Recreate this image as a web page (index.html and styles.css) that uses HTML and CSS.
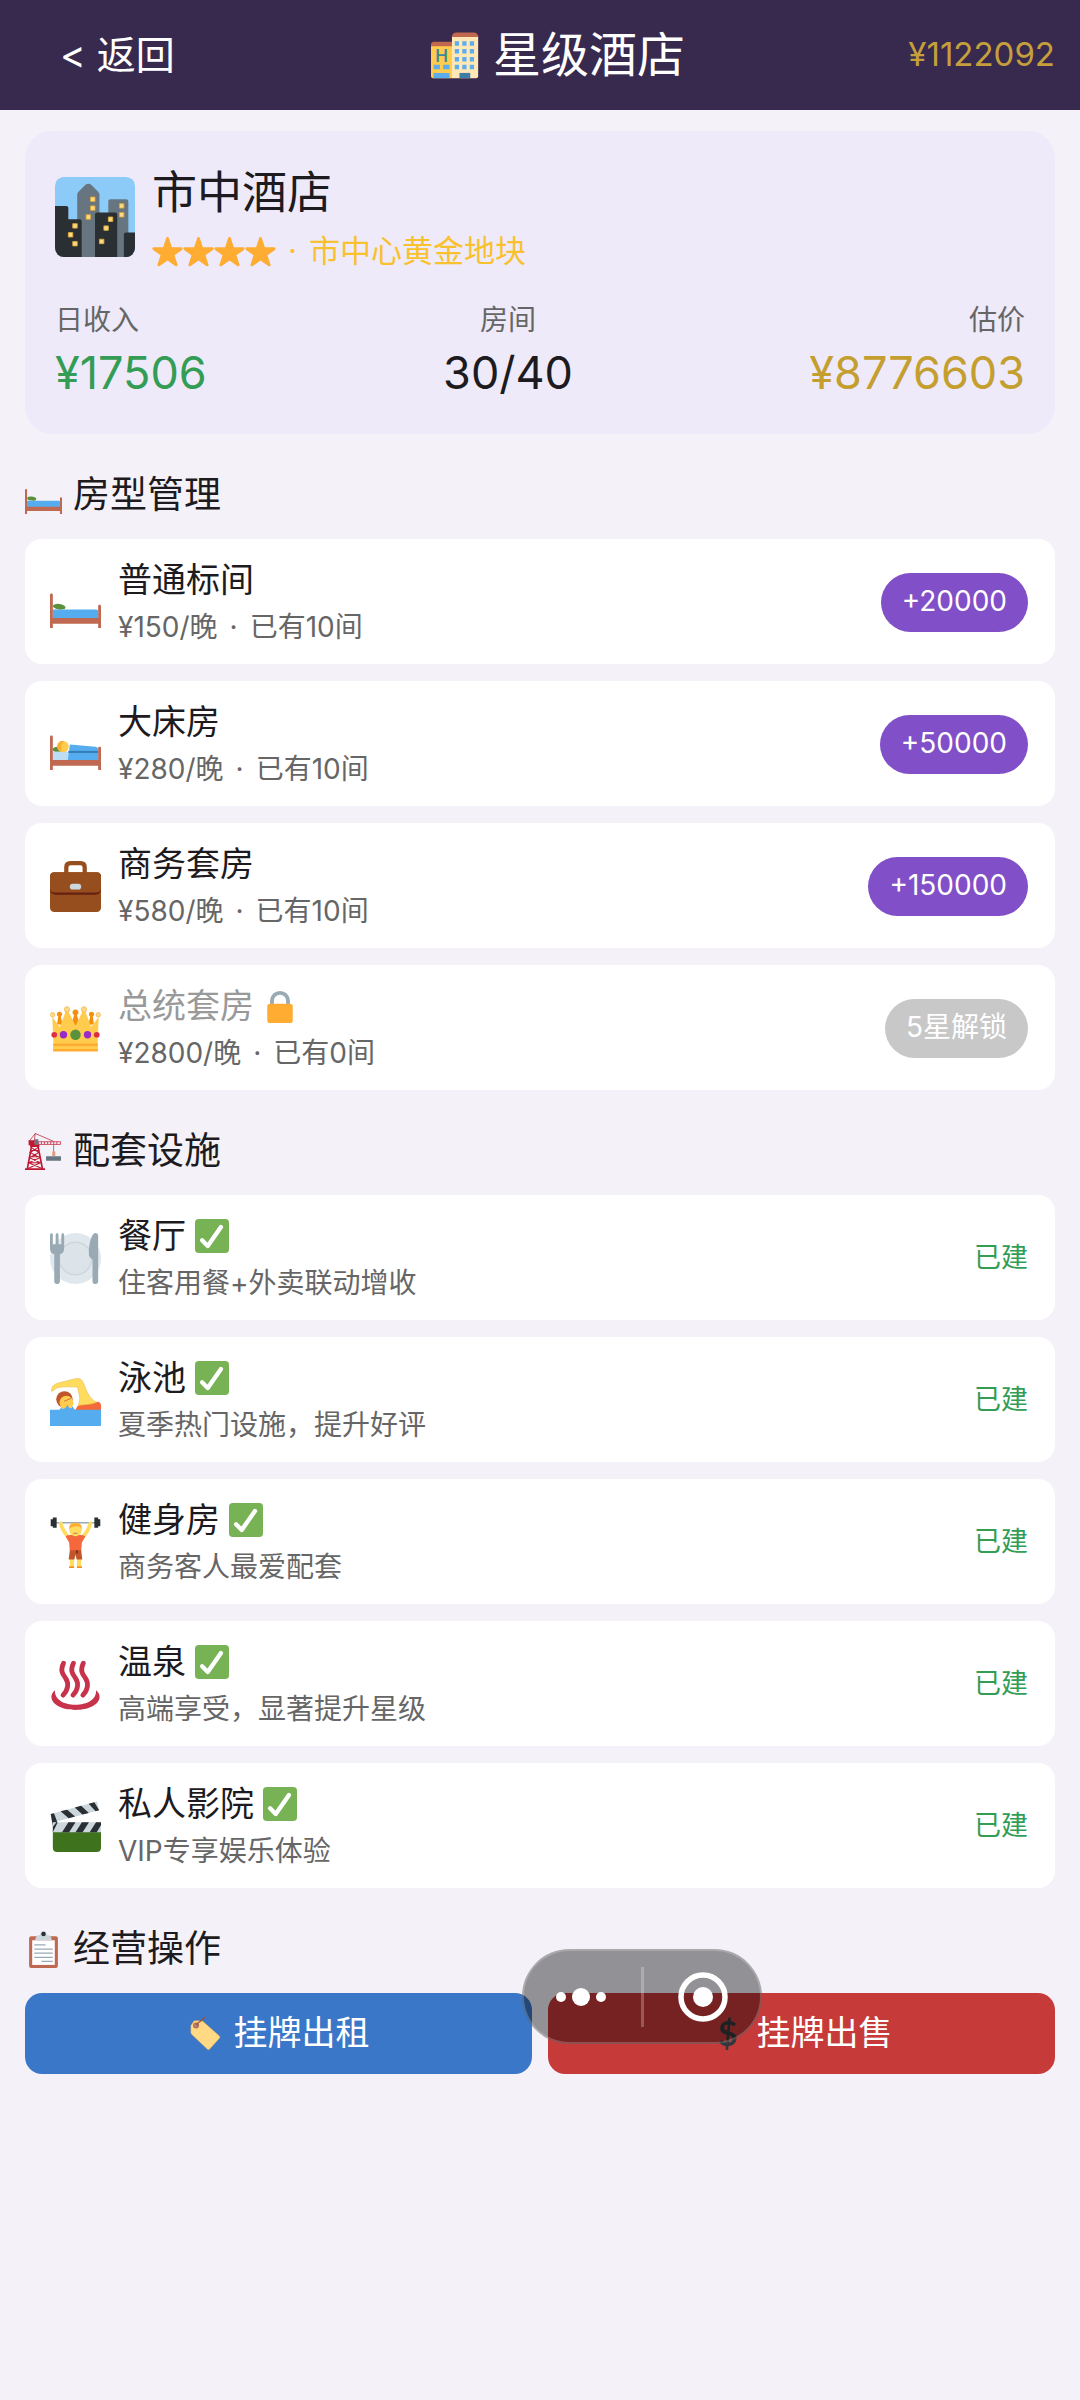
FILE: index.html
```html
<!DOCTYPE html>
<html lang="zh-CN">
<head>
    <meta charset="UTF-8">
    <title>星级酒店</title>
    <meta name="viewport" content="width=device-width, initial-scale=1.0">
    <link rel="stylesheet" href="styles.css">
</head>
<body>
    <!-- Shared icons -->
    <svg class="sprite" aria-hidden="true">
        <symbol id="star" viewBox="0 0 36 36">
            <path fill="#FFAC33" d="M28 35.200c-.4 0-.7-.1-1-.3L18 28.500l-9 6.400c-.6.4-1.400.4-2 0-.6-.4-.8-1.200-.6-1.900l3.500-10.600L1.200 16.200c-.6-.4-.8-1.200-.6-1.900.2-.7.9-1.200 1.600-1.200l10.700 0 3.500-10.600c.2-.7.9-1.200 1.600-1.200s1.400.5 1.600 1.200l3.500 10.600 10.700 0c.7 0 1.400.5 1.600 1.200.2.7 0 1.500-.6 1.900l-8.700 6.200L29.600 33c.2.7 0 1.500-.6 1.900-.3.2-.6.3-1 .3z"/>
        </symbol>
        <symbol id="check" viewBox="0 0 36 36">
            <rect width="36" height="36" rx="4" fill="#77B255"/>
            <path d="M7.500 22.500l6 6L27.500 8.500" fill="none" stroke="#fff" stroke-width="4.600" stroke-linecap="round" stroke-linejoin="round"/>
        </symbol>
        <symbol id="bed" viewBox="0 0 36 36">
            <ellipse cx="6.500" cy="21" rx="4.500" ry="2" fill="#5C913B" transform="rotate(8 6.500 21)"/>
            <path fill="#55ACEE" d="M2 23h30.500c1 0 1.500.5 1.500 1.500V30H2z"/>
            <path fill="#BF6952" d="M0 12.500c0-1.200 2-1.200 2 0V29h32v-8.500c0-1.200 2-1.200 2 0V36h-2v-3H2v3H0z"/>
        </symbol>
    </svg>

    <header class="topbar">
        <button type="button" class="back">&lt; 返回</button>
        <h1 class="topbar-title">
            <svg class="icon-row" viewBox="0 0 36 36" aria-hidden="true">
                <path fill="#FFCC4D" d="M.700 10h15v24H2c-.8 0-1.300-.5-1.300-1.300z"/>
                <path fill="#C1694F" d="M.700 11.500V10.500c0-1.300.9-2.200 2.200-2.200h12.800v3.200z"/>
                <path fill="#FFE8B6" d="M15.500 4H34v28.700c0 .8-.5 1.300-1.300 1.300H15.500z"/>
                <path fill="#C1694F" d="M15.500 5c0-2 1.200-3.200 3.200-3.200h12.100C32.800 1.800 34 3 34 5z"/>
                <path fill="#5DADEC" d="M17.500 8h3v3.200h-3zM22.800 8h3v3.200h-3zM28.100 8h3v3.200h-3zM17.500 13.400h3v3.200h-3zM22.800 13.400h3v3.200h-3zM28.100 13.400h3v3.200h-3zM17.500 19h3v3.200h-3zM22.800 19h3v3.200h-3zM28.100 19h3v3.200h-3zM17.500 24.500h3v3.200h-3zM22.800 24.500h3v3.200h-3zM28.100 24.500h3v3.200h-3zM2.500 24.500h4.500v3.200H2.500zM9.300 24.500h4.500v3.200H9.300zM2.500 30.300h11.300V34H2.500z"/>
                <path fill="#3B7FA8" d="M20.800 30.300h7.600V34h-7.600z"/>
                <text class="sign" x="8.100" y="22.600" text-anchor="middle">H</text>
            </svg>
            <span>星级酒店</span>
        </h1>
        <div class="balance">¥1122092</div>
    </header>

    <main class="page">
        <section class="hotel-card">
            <div class="hotel-head">
                <svg class="hotel-icon" viewBox="0 0 36 36" aria-hidden="true">
                    <clipPath id="city"><rect width="36" height="36" rx="4"/></clipPath>
                    <g clip-path="url(#city)">
                        <rect width="36" height="36" fill="#8CCAF7"/>
                        <path fill="#66757F" d="M10 36V8c0-.6.2-1 .6-1.400l3-3c.8-.8 2-.8 2.800 0l3 3c.4.4.6.8.6 1.400v28zM24 36V11c0-.6.4-1 1-1h7c.6 0 1 .4 1 1v25z"/>
                        <path fill="#292F33" d="M0 36V13h5c.6 0 1 .4 1 1v5h5c.6 0 1 .4 1 1v16zM18 36V17c0-.6.4-1 1-1h8c.6 0 1 .4 1 1v19zM31 36V26c0-.6.4-1 1-1h4v11z"/>
                        <path fill="#FFD983" stroke="#D9A93A" stroke-width=".4" d="M16 9h2v2h-2zM16 13h2v2h-2zM14 17h2v2h-2zM29 12h2v2h-2zM29 16h2v2h-2zM24 18h2v2h-2zM22 22h2v2h-2zM20 28h2v2h-2zM8 21h2v2H8zM6 25h2v2H6zM8 29h2v2H8z"/>
                    </g>
                </svg>
                <div class="hotel-text">
                    <h2 class="hotel-name">市中酒店</h2>
                    <div class="hotel-level">
                        <span class="stars" role="img" aria-label="4星">
                            <svg><use href="#star"/></svg><svg><use href="#star"/></svg><svg><use href="#star"/></svg><svg><use href="#star"/></svg>
                        </span>
                        <span class="dot">·</span>
                        <span>市中心黄金地块</span>
                    </div>
                </div>
            </div>
            <div class="stats">
                <div class="stat">
                    <div class="stat-label">日收入</div>
                    <div class="stat-value green">¥17506</div>
                </div>
                <div class="stat stat-mid">
                    <div class="stat-label">房间</div>
                    <div class="stat-value">30/40</div>
                </div>
                <div class="stat stat-end">
                    <div class="stat-label">估价</div>
                    <div class="stat-value gold">¥8776603</div>
                </div>
            </div>
        </section>

        <!-- Room types -->
        <h2 class="section-title"><svg class="icon-title"><use href="#bed"/></svg>房型管理</h2>
        <div class="list">
            <div class="row">
                <svg class="icon-row" aria-hidden="true"><use href="#bed"/></svg>
                <div class="row-text">
                    <div class="row-name">普通标间</div>
                    <div class="row-sub">¥150/晚<span class="dot">·</span>已有10间</div>
                </div>
                <button type="button" class="pill">+20000</button>
            </div>
            <div class="row">
                <svg class="icon-row" viewBox="0 0 36 36" aria-hidden="true">
                    <ellipse cx="5.500" cy="21.500" rx="3.500" ry="2" fill="#5C913B"/>
                    <path fill="#BDDDF4" d="M2 23h12v7H2z"/>
                    <path fill="#55ACEE" d="M12.500 30l1.500-12 18 1.500c1.200.1 2 1 2 2V30z"/>
                    <path fill="#3B88C3" d="M13 22.500h21v1H13z"/>
                    <path fill="#269" d="M13 23.100h21v.6H13z"/>
                    <circle cx="9.200" cy="19.500" r="4" fill="#FFCC4D"/>
                    <path fill="#FFAC33" d="M5.200 19.500c0-4 3.500-4.600 5-3.600-2 .4-2.500 2.500-2 6.900-2-.3-3-1.500-3-3.300z"/>
                    <path fill="#BF6952" d="M0 12.500c0-1.200 2-1.200 2 0V29h32v-8.500c0-1.200 2-1.200 2 0V36h-2v-3H2v3H0z"/>
                </svg>
                <div class="row-text">
                    <div class="row-name">大床房</div>
                    <div class="row-sub">¥280/晚<span class="dot">·</span>已有10间</div>
                </div>
                <button type="button" class="pill">+50000</button>
            </div>
            <div class="row">
                <svg class="icon-row" viewBox="0 0 36 36" aria-hidden="true">
                    <path d="M11.500 10V4.500c0-2 1-3 3-3h7c2 0 3 1 3 3V10" fill="none" stroke="#974E1E" stroke-width="3"/>
                    <rect y="8" width="36" height="28" rx="3" fill="#974E1E"/>
                    <path fill="#662113" d="M0 20c0 2 1.300 3.800 4 3.800h28c2.700 0 4-1.800 4-3.800v-1.500H0z"/>
                    <path fill="#974E1E" d="M0 11c0-2 1-3 3-3h30c2 0 3 1 3 3v8c0 2-1.500 3.300-3.500 3.300h-29C1.500 22.300 0 21 0 19z"/>
                    <rect x="14" y="16" width="8" height="4.200" rx="2" fill="#CCD6DD"/>
                </svg>
                <div class="row-text">
                    <div class="row-name">商务套房</div>
                    <div class="row-sub">¥580/晚<span class="dot">·</span>已有10间</div>
                </div>
                <button type="button" class="pill">+150000</button>
            </div>
            <div class="row">
                <svg class="icon-row" viewBox="0 0 36 36" aria-hidden="true">
                    <path fill="#F4900C" d="M14.500 17l2.500-8.500a2.100 2.100 0 1 1 2 0L21.500 17zM5 15l.8-5.500a1.800 1.800 0 1 1 1.800 0l1.400 6zM31 15l-.8-5.500a1.800 1.800 0 1 0-1.800 0l-1.400 6z"/>
                    <path fill="#FFCC4D" d="M2.500 30L1.600 9.800l5.400 7.200L11.200 5.500h1.600L18 16l5.200-10.500h1.600L29 17l5.400-7.200L33.500 30z"/>
                    <g fill="#FFD983" stroke="#E8A93C" stroke-width=".4">
                        <circle cx="1.900" cy="8.300" r="1.600"/>
                        <circle cx="12" cy="4.500" r="1.900"/>
                        <circle cx="24" cy="4.500" r="1.900"/>
                        <circle cx="34.100" cy="8.300" r="1.600"/>
                    </g>
                    <path fill="#FFAC33" d="M2.200 28.500h31.600v2H2.200zM2.200 32.500h31.600v1.800H2.200z"/>
                    <path fill="#FFCC4D" d="M2.200 30.300h31.600v2.200H2.200z"/>
                    <circle cx="3" cy="22.400" r="2" fill="#DD2E44"/>
                    <circle cx="33" cy="22.400" r="2" fill="#DD2E44"/>
                    <circle cx="9.500" cy="22.400" r="2.600" fill="#9A2BC9"/>
                    <circle cx="26.500" cy="22.400" r="2.600" fill="#9A2BC9"/>
                    <circle cx="18" cy="22.400" r="3.700" fill="#5C913B"/>
                </svg>
                <div class="row-text">
                    <div class="row-name locked">总统套房
                        <svg class="icon-name" viewBox="0 0 36 36" aria-label="未解锁">
                            <path d="M9.500 18v-5.500a8.500 8.500 0 0 1 17 0V18" fill="none" stroke="#99AAB5" stroke-width="4"/>
                            <rect x="4.500" y="15.500" width="27" height="20.500" rx="3" fill="#FFAC33"/>
                        </svg>
                    </div>
                    <div class="row-sub">¥2800/晚<span class="dot">·</span>已有0间</div>
                </div>
                <button type="button" class="pill" disabled>5星解锁</button>
            </div>
        </div>

        <!-- Facilities -->
        <h2 class="section-title">
            <svg class="icon-title" viewBox="0 0 36 36" aria-hidden="true">
                <g fill="none" stroke="#BE1931">
                    <path stroke-width="1.600" d="M6.500 12L2.300 35M12.500 12L17 35"/>
                    <path stroke-width="1" d="M6 14l7.500 5-9 5 10.500 5-12 5.500M13 14l-8 5 9.500 5-11 5 13 5.500M6 17h7.500M4.800 23h9.600M3.800 29h12"/>
                    <path stroke-width=".7" d="M4 8L10 .5 27.500 8M10 .5L9 8M13 8.500h21.500v2.600H13zM16 8.500v2.600M19 8.500v2.600M22 8.500v2.600M25 8.500v2.600M28 8.500v2.600M31 8.500v2.600"/>
                </g>
                <path fill="#BE1931" d="M0 34.400h19.500V36H0zM3.500 7h6v5h-6zM5 11h9v2.500H5z"/>
                <path fill="#66757F" d="M9.500 6h3.500v5.500H9.500zM27.500 11h.8v8h-.8zM20.500 22.500H35V27H20.500z"/>
                <path fill="#D99E82" d="M26.500 18h3v4.500h-3z"/>
            </svg>配套设施
        </h2>
        <div class="list">
            <div class="row">
                <svg class="icon-row" viewBox="0 0 36 36" aria-hidden="true">
                    <circle cx="18" cy="18" r="18" fill="#E1E8ED"/>
                    <circle cx="18" cy="18" r="11.500" fill="#DCE4EA" stroke="#CCD6DD"/>
                    <path fill="#99AAB5" d="M0 1.500c0-1.800 2-1.800 2 0V8h2V1.500c0-1.800 2-1.800 2 0V8h2V1.500c0-1.800 2-1.800 2 0V11c0 2-1 3.500-3 4v19c0 2.700-4 2.700-4 0V15c-2-.5-3-2-3-4z"/>
                    <path fill="#99AAB5" d="M34 2v32c0 2.700-4 2.700-4 0V18.500c-2-.5-2.600-2-2.600-4.500C27.400 7 29.500 0 32 0c1.300 0 2 .8 2 2z"/>
                </svg>
                <div class="row-text">
                    <div class="row-name">餐厅 <svg class="icon-name"><use href="#check"/></svg></div>
                    <div class="row-sub">住客用餐+外卖联动增收</div>
                </div>
                <span class="built">已建</span>
            </div>
            <div class="row">
                <svg class="icon-row" viewBox="0 0 36 36" aria-hidden="true">
                    <path fill="#F4683B" d="M18 25c1-3.500 3-5 7-5l9-1.200c1.300.3 2 1.200 2 2.700V25z"/>
                    <path fill="#FFDC5D" stroke="#E5B94A" stroke-width=".4" d="M1 11.500C1 8.500 2.500 6.500 6 5.600l12-3c2.700-.6 4.600.4 5.600 3C26 12 28 17 33 19.200c-4 2-9.500 1.500-13 2.300.5-2.500 1.500-4.500.8-7-.5-2-1-4-1.400-6C14 8.500 9 8 5.500 9 3.500 9.500 2.500 11.500 1 11.500z"/>
                    <circle cx="10.200" cy="17.200" r="5.800" fill="#C1552B"/>
                    <circle cx="11.600" cy="19.600" r="4.900" fill="#FFCC4D"/>
                    <path fill="none" stroke="#C1694F" stroke-width=".6" d="M10 18.500l5-2"/>
                    <path fill="#55ACEE" d="M0 24.500h5.500c1.200 0 2-.5 2.500-2 .6 1.500 1.800 1.800 3 .5.8-.8 1.200-1.500 1.500-2 .6 2.400 2 3.500 3.500 1 .5 1.700 1.500 2.500 3 2.500h17V36H0z"/>
                </svg>
                <div class="row-text">
                    <div class="row-name">泳池 <svg class="icon-name"><use href="#check"/></svg></div>
                    <div class="row-sub">夏季热门设施，提升好评</div>
                </div>
                <span class="built">已建</span>
            </div>
            <div class="row">
                <svg class="icon-row" viewBox="0 0 36 36" aria-hidden="true">
                    <path fill="#99AAB5" d="M1 3.600h34v.9H1z"/>
                    <path fill="#292F33" d="M.500 1.500H2v5H.500zM2 .4h2.700v7.200H2zM31.300.4H34v7.200h-2.700zM34 1.500h1.500v5H34z"/>
                    <path d="M7.500 4.500c1 4 3 7 6 10.500M28.500 4.500c-1 4-3 7-6 10.500" fill="none" stroke="#FFDC5D" stroke-width="2.600" stroke-linecap="round"/>
                    <path fill="#FFDC5D" d="M14 28h3v7h-3zM19 28h3v7h-3z"/>
                    <path fill="#F4683B" d="M11 13.500c2-1 4.500-1 7-1s5 0 7 1l-2.500 4.500-.5 6h-8l-.5-6z"/>
                    <path fill="#C1552B" d="M14 23.500h8l.8 6.500h-4L18 26.500l-.8 3.500h-4z"/>
                    <path fill="#662113" d="M18.500 23.500h1v2h-1z"/>
                    <circle cx="18" cy="9.300" r="4.300" fill="#FFDC5D"/>
                    <path fill="#FFAC33" d="M13.500 9C13.200 5.500 15 4 18 4s4.800 1.500 4.500 5c-.8-2-2-2.600-3.500-2.400-1.600.3-4-.2-5.500 2.400z"/>
                    <path fill="none" stroke="#C1694F" stroke-width=".6" d="M16.500 11.500h3"/>
                    <path fill="#F4900C" d="M13.500 34.700H17V36h-3.500zM19 34.700h3.500V36H19z"/>
                </svg>
                <div class="row-text">
                    <div class="row-name">健身房 <svg class="icon-name"><use href="#check"/></svg></div>
                    <div class="row-sub">商务客人最爱配套</div>
                </div>
                <span class="built">已建</span>
            </div>
            <div class="row">
                <svg class="icon-row" viewBox="0 0 36 36" aria-hidden="true">
                    <path d="M9.500 3c-2.500 5.500-.5 7.500 1.500 10.500 2.300 3.500 2 8-1.800 12M16.500 3c-2.500 5.500-.5 7.500 1.500 10.500 2.300 3.500 2 8-1.800 12M23.500 3c-2.500 5.500-.5 7.500 1.500 10.500 2.300 3.500 2 8-1.800 12" fill="none" stroke="#C7334B" stroke-width="3.400" stroke-linecap="round"/>
                    <path fill="#C7334B" d="M3.500 22c-.5 6.500 6.500 10.300 14.500 10.300S33 28.500 32.500 22c1.600 1.300 2.500 3 2.500 4.700C35 32 27.500 36 18 36S1 32 1 26.700C1 25 1.900 23.300 3.500 22z"/>
                </svg>
                <div class="row-text">
                    <div class="row-name">温泉 <svg class="icon-name"><use href="#check"/></svg></div>
                    <div class="row-sub">高端享受，显著提升星级</div>
                </div>
                <span class="built">已建</span>
            </div>
            <div class="row">
                <svg class="icon-row" viewBox="0 0 36 36" aria-hidden="true">
                    <path fill="#3E721D" d="M2 21h34v12c0 2-1 3-3 3H5c-2 0-3-1-3-3z"/>
                    <path fill="#CCD6DD" d="M2 15h34v7H2zM.500 9.200L33.200.3l1.500 6.300L2 15.200z"/>
                    <path fill="#292F33" d="M.500 9.200l2.300-.6L5 14.400l-3 3.800zM7.500 7.300l4.600-1.200 5.600 4.900-4.500 1.200zM17.500 4.600L22 3.400l5.400 5-4.500 1.200zM27.300 1.900l4-1.100 3.400 5.800-2.500.7zM2 22l3.500-7H2zM8.500 22l4.500-7h5l-4.500 7zM18 22l4.500-7h5L23 22zM28 22l4.500-7H36v2l-3 5z"/>
                </svg>
                <div class="row-text">
                    <div class="row-name">私人影院 <svg class="icon-name"><use href="#check"/></svg></div>
                    <div class="row-sub">VIP专享娱乐体验</div>
                </div>
                <span class="built">已建</span>
            </div>
        </div>

        <!-- Operations -->
        <h2 class="section-title">
            <svg class="icon-title" viewBox="0 0 36 36" aria-hidden="true">
                <rect x="4" y="5" width="28" height="31" rx="2" fill="#BF6952"/>
                <path fill="#fff" d="M7 9h22v24H7z"/>
                <path fill="#CCD6DD" d="M10 9c0-3 1.500-5 4.500-5 .5-2 1.700-4 3.500-4s3 2 3.500 4C24.500 4 26 6 26 9z"/>
                <circle cx="18" cy="3" r="2.200" fill="#292F33"/>
                <path fill="#99AAB5" d="M9 13h11v1.200H9zM9 17h18v1.200H9zM9 21h18v1.200H9zM9 25h18v1.200H9zM16 29h11v1.200H16z"/>
            </svg>经营操作
        </h2>
        <div class="actions">
            <button type="button" class="action rent">
                <svg class="icon-name" viewBox="0 0 36 36" aria-hidden="true">
                    <path fill="#FFD983" stroke="#D99E3A" stroke-width=".4" d="M3 9l3.500-5h7.500c1 0 1.600.3 2.300 1L33 19.800c1 .9 1 1.800.3 2.700L23 34c-.8.9-1.900.9-2.800 0L4 18.500c-.7-.7-1-1.300-1-2.200z"/>
                    <circle cx="8.500" cy="9" r="3.200" fill="#C1694F"/>
                    <circle cx="8.500" cy="9" r="1.600" fill="#8A9BB8"/>
                    <path d="M9 9c1-4 4-3.500 6-6 1-1 1.500-2 3-2.500" fill="none" stroke="#A0522D" stroke-width="1.400"/>
                </svg>挂牌出租
            </button>
            <button type="button" class="action sell"><span class="dollar">$</span>挂牌出售</button>

            <!-- Floating capsule over the buttons -->
            <div class="capsule">
                <button type="button" class="capsule-btn" aria-label="更多">
                    <svg width="52" height="52" viewBox="0 0 52 52" fill="#fff"><circle cx="6" cy="26" r="5"/><circle cx="26" cy="26" r="9"/><circle cx="46" cy="26" r="5"/></svg>
                </button>
                <button type="button" class="capsule-btn" aria-label="关闭">
                    <svg width="52" height="52" viewBox="0 0 52 52"><circle cx="26" cy="26" r="22" fill="none" stroke="#fff" stroke-width="5.500"/><circle cx="26" cy="26" r="10" fill="#fff"/></svg>
                </button>
            </div>
        </div>
    </main>
</body>
</html>
```
FILE: styles.css
```css
* {
    box-sizing: border-box;
}

body {
    margin: 0;
    min-height: 100vh;
    background-color: #F4F2F8;
    color: #1D1B20;
    font-family: Inter, "Noto Sans CJK SC", sans-serif;
    line-height: 1.2;
}

h1, h2 {
    margin: 0;
    font-weight: 400;
}

button {
    border: 0;
    font: inherit;
    cursor: pointer;
}

svg {
    flex: none;
}

.sprite {
    position: absolute;
    width: 0;
    height: 0;
}

/* Header */
.topbar {
    display: flex;
    justify-content: space-between;
    align-items: center;
    height: 110px;
    padding: 0 25px;
    background-color: #38294E;
    color: #fff;
}

.back {
    padding: 0 32px 0 35px;
    background: none;
    color: #fff;
    font-size: 39px;
    line-height: 44px;
}

.topbar-title {
    display: flex;
    align-items: center;
    gap: 12px;
    font-size: 48px;
    line-height: 52px;
}

.sign {
    fill: #3B8A96;
    font-size: 12px;
    font-weight: 600;
}

.balance {
    color: #C49F3C;
    font-size: 33px;
}

.page {
    padding: 21px 25px;
}

/* Hotel summary */
.hotel-card {
    padding: 30px;
    border-radius: 27px;
    background-color: #EEEAF9;
}

.hotel-head {
    display: flex;
    align-items: center;
    gap: 17px;
}

.hotel-icon {
    width: 80px;
    height: 80px;
}

.hotel-name {
    font-size: 45px;
    line-height: 64px;
}

.hotel-level {
    display: flex;
    align-items: center;
    margin-top: 4px;
    color: #F9C12E;
    font-size: 31px;
    line-height: 44px;
}

.stars {
    display: flex;
}

.stars svg {
    width: 31px;
    height: 31px;
}

.dot {
    padding: 0 12px;
}

.stats {
    display: flex;
    justify-content: space-between;
    margin-top: 27px;
}

.stat-mid {
    text-align: center;
}

.stat-end {
    text-align: right;
}

.stat-label {
    color: #666;
    font-size: 28px;
    line-height: 40px;
}

.stat-value {
    margin-top: 2px;
    font-size: 45px;
    line-height: 62px;
}

.green {
    color: #339C55;
}

.gold {
    color: #C49F30;
}

/* Sections */
.section-title {
    display: flex;
    align-items: center;
    gap: 11px;
    margin: 36px 0 19px;
    font-size: 37px;
    line-height: 50px;
}

.icon-title {
    width: 37px;
    height: 37px;
}

.list {
    display: flex;
    flex-direction: column;
    gap: 17px;
}

.row {
    display: flex;
    align-items: center;
    gap: 17px;
    padding: 18px 27px 17px 25px;
    border-radius: 17px;
    background-color: #fff;
}

.icon-row {
    width: 51px;
    height: 51px;
}

.row-text {
    flex: 1;
}

.row-name {
    display: flex;
    align-items: center;
    gap: 9px;
    font-size: 34px;
    line-height: 46px;
}

.row-name.locked {
    color: #999;
}

.icon-name {
    width: 34px;
    height: 34px;
}

.row-sub {
    margin-top: 4px;
    color: #666;
    font-size: 28px;
    line-height: 40px;
}

.pill {
    height: 59px;
    padding: 0 21px;
    border-radius: 30px;
    background-color: #814FC7;
    color: #fff;
    font-size: 28px;
}

.pill:disabled {
    background-color: #C8C8C8;
    cursor: default;
}

.built {
    color: #339C55;
    font-size: 27px;
}

/* Bottom buttons */
.actions {
    position: relative;
    display: flex;
    gap: 16px;
}

.action {
    flex: 1;
    display: flex;
    justify-content: center;
    align-items: center;
    gap: 12px;
    height: 81px;
    border-radius: 17px;
    color: #fff;
    font-size: 34px;
}

.rent {
    background-color: #3B77C8;
}

.sell {
    background-color: #C63A3A;
}

.dollar {
    width: 34px;
    color: #31373D;
    font-family: Lato, sans-serif;
    font-weight: 700;
    text-align: center;
}

.capsule {
    position: absolute;
    top: -44px;
    left: calc(50% - 18px);
    display: flex;
    gap: 8px;
    width: 240px;
    height: 95px;
    border: 2px solid rgba(255, 255, 255, 0.2);
    border-radius: 48px;
    background-color: rgba(0, 0, 0, 0.4);
}

.capsule-btn {
    flex: 1;
    display: flex;
    justify-content: center;
    align-items: center;
    padding: 0;
    background: none;
}

/* thin divider between the two capsule buttons */
.capsule-btn + .capsule-btn::before {
    content: '';
    position: absolute;
    left: 117px;
    width: 3px;
    height: 60px;
    background-color: rgba(255, 255, 255, 0.25);
}
```
